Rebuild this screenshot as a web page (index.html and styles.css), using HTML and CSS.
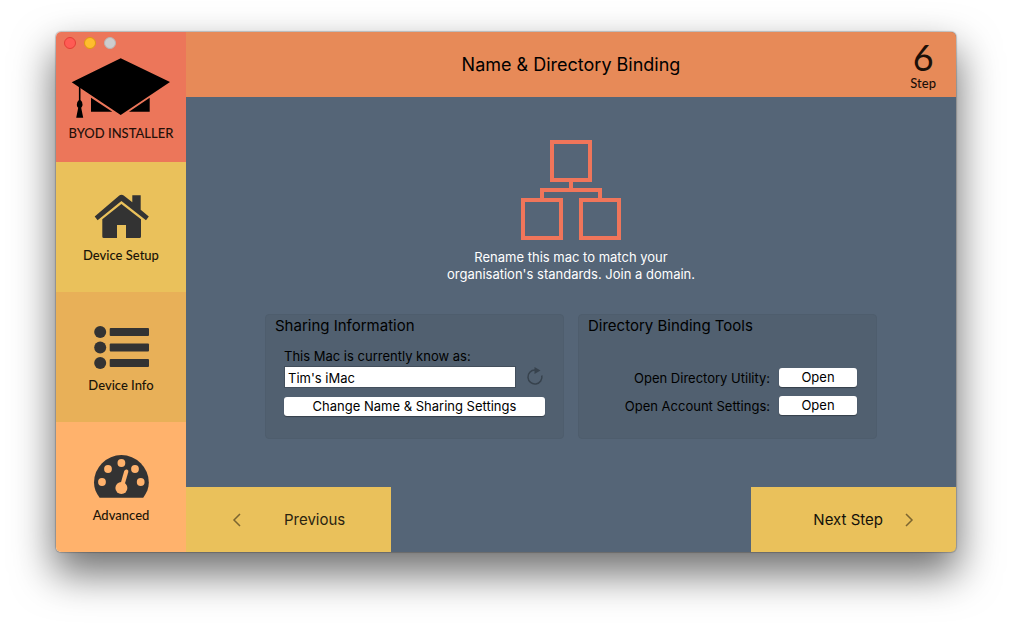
FILE: index.html
```html
<!DOCTYPE html>
<html lang="en">
<head>
<meta charset="utf-8">
<title>BYOD Installer</title>
<link rel="stylesheet" href="styles.css">
</head>
<body>
<div class="window">
  <nav class="sidebar">
    <div class="brand">
      <div class="lights">
        <button class="light close" aria-label="Close"></button>
        <button class="light minimize" aria-label="Minimize"></button>
        <button class="light zoom" aria-label="Zoom" disabled></button>
      </div>
      <svg class="logo" width="100" height="60" viewBox="0 0 100 60" aria-hidden="true">
        <path d="M49.7 .3 99 24 49.7 57 .7 24.3zM20 39.7V53.7H41.3zM78.7 39.7V53.7H58z"/>
        <path d="M7.9 28H9.5V42Q12 44 11.6 47 11 49 10.2 49.7L12.2 59.8H5.2L7.2 49.7Q6 49 5.8 47 5.4 44 7.9 42z"/>
      </svg>
      <span class="side-label">BYOD INSTALLER</span>
    </div>
    <a class="item setup" href="#setup">
      <svg width="54" height="45" viewBox="0 0 54 45" aria-hidden="true">
        <path d="M25.3 1.4Q27.5 0 29.7 1.4L38.3 8.3V1.3H46.7V15.7L54.8 22.5 52 26.2 27.4 7 3.6 26.2.7 22.5z"/>
        <path d="M27.4 10 47 25.3V42.5Q47 44 45.5 44H32V31H23V44H9.8Q8.3 44 8.3 42.5V25.3z"/>
      </svg>
      <span class="side-label">Device Setup</span>
    </a>
    <a class="item info" href="#info">
      <svg width="54" height="45" viewBox="0 0 54 45" aria-hidden="true">
        <circle cx="6.2" cy="8" r="6"/><circle cx="6.2" cy="23.5" r="6"/><circle cx="6.2" cy="39" r="6"/>
        <rect x="15.7" y="4" width="39.3" height="8" rx="1"/><rect x="15.7" y="19.5" width="39.3" height="8" rx="1"/><rect x="15.7" y="35" width="39.3" height="8" rx="1"/>
      </svg>
      <span class="side-label">Device Info</span>
    </a>
    <a class="item advanced" href="#advanced">
      <svg width="54" height="45" viewBox="0 0 54 45" aria-hidden="true">
        <path d="M5.6 43.7C2 39 0 34 0 28.5A27.4 27.4 0 0 1 54.8 28.5C54.8 34 52.8 39 49.2 43.7z"/>
        <g class="cut">
          <circle cx="27.4" cy="9" r="3.9"/><circle cx="14" cy="15" r="3.9"/><circle cx="41" cy="15" r="3.9"/>
          <circle cx="8" cy="28" r="3.9"/><circle cx="46.7" cy="28" r="3.9"/><circle cx="27.4" cy="34" r="6"/>
          <path d="M30.2 17Q31 15 33 15.5 34.8 16.200 34.3 18L30.5 31 26.5 30z"/>
        </g>
      </svg>
      <span class="side-label">Advanced</span>
    </a>
  </nav>
  <main class="main">
    <header class="header">
      <h1 class="title">Name &amp; Directory Binding</h1>
      <div class="step"><span class="step-number">6</span><span class="step-label">Step</span></div>
    </header>
    <section class="content">
      <svg class="network" width="100" height="100" viewBox="0 0 100 100" aria-hidden="true">
        <path d="M31 2H69V40H31zM2 60H40V98H2zM60 60H98V98H60zM50 40V50M21 60V50H79V60"/>
      </svg>
      <p class="intro">Rename this mac to match your<br>organisation's standards. Join a domain.</p>
      <div class="panels">
        <section class="panel">
          <h2 class="panel-title">Sharing Information</h2>
          <form class="sharing">
            <label class="name-label" for="mac-name">This Mac is currently know as:</label>
            <div class="name-row">
              <input class="name-input" id="mac-name" type="text" value="Tim's iMac">
              <button class="reload" type="button" aria-label="Reload name">
                <svg width="18" height="20" viewBox="0 0 18 20" aria-hidden="true">
                  <path class="ring" d="M9 3A7 7 0 1 0 15.8 8.500"/><path class="tip" d="M8.5 0 14.5 3.500 8.5 7z"/>
                </svg>
              </button>
            </div>
            <button class="button" type="button">Change Name &amp; Sharing Settings</button>
          </form>
        </section>
        <section class="panel">
          <h2 class="panel-title">Directory Binding Tools</h2>
          <div class="tools">
            <span id="utility">Open Directory Utility:</span><button class="button" type="button" aria-describedby="utility">Open</button>
            <span id="account">Open Account Settings:</span><button class="button" type="button" aria-describedby="account">Open</button>
          </div>
        </section>
      </div>
    </section>
    <footer class="footer">
      <button class="nav-button previous" type="button">
        <svg width="8" height="14" viewBox="0 0 8 14" aria-hidden="true"><path d="M7 1 1 7 7 13"/></svg>
        <span>Previous</span>
      </button>
      <button class="nav-button next" type="button">
        <span>Next Step</span>
        <svg width="8" height="14" viewBox="0 0 8 14" aria-hidden="true"><path d="M1 1 7 7 1 13"/></svg>
      </button>
    </footer>
  </main>
</div>
</body>
</html>
```
FILE: styles.css
```css
* { box-sizing: border-box; }

body {
  margin: 0;
  min-height: 100vh;
  padding: 32px 56px 80px;
  display: flex;
  background: #fff;
  color: #000;
  font: 13px/16px Inter, "Liberation Sans", sans-serif;
}

button, input { font: inherit; color: inherit; margin: 0; }
button { border: 0; padding: 0; background: none; }
h1, h2, p { margin: 0; font-weight: 400; }
svg { display: block; flex: none; overflow: visible; }

.window {
  flex: 1;
  display: grid;
  grid-template-columns: 130px 1fr;
  border-radius: 5px;
  overflow: hidden;
  box-shadow: 0 0 1px 1px rgba(0, 0, 0, .2), 0 20px 40px 2px rgba(0, 0, 0, .56);
}

.sidebar { display: grid; grid-template-rows: repeat(4, 1fr); }
.brand, .item { display: flex; flex-direction: column; align-items: center; }
.brand { background: #ec765a; }
.item { padding-top: 32px; gap: 8px; color: #1a1408; text-decoration: none; }
.item svg { fill: #333; }
.setup { background: #eac15b; }
.info { background: #e8b058; }
.advanced { background: #ffb26c; }
.advanced .cut { fill: #ffb26c; }
.side-label { font: 500 13px/16px Lato, sans-serif; }
.brand .side-label { margin-top: 7px; color: #241009; }

.lights { align-self: flex-start; display: flex; gap: 8px; padding: 5px 8px 9px; }
.light { width: 12px; height: 12px; border: 1px solid; border-radius: 50%; }
.close { background: #ff5b54; border-color: #e33e37; }
.minimize { background: #ffbd2e; border-color: #dd9a12; }
.zoom { background: #cdcdcd; border-color: #b9b4b2; }

.main { display: grid; grid-template-rows: 65px 1fr 65px; background: #556577; }
.header {
  display: grid;
  grid-template-columns: 1fr auto 1fr;
  align-items: center;
  padding: 0 20px;
  background: #e78a58;
}
.title { grid-column: 2; font-size: 18px; line-height: 24px; }
.step {
  justify-self: end;
  display: flex;
  flex-direction: column;
  align-items: center;
  color: #1c1008;
  font-family: Lato, sans-serif;
}
.step-number { font-size: 36px; line-height: 36px; }
.step-label { font-size: 13px; line-height: 16px; font-weight: 500; }

.content { display: flex; flex-direction: column; align-items: center; padding-top: 43px; }
.network { fill: none; stroke: #f0755a; stroke-width: 4; }
.intro { margin-top: 9px; color: #fff; line-height: 17px; text-align: center; }
.panels { display: grid; grid-template-columns: 299px 299px; gap: 14px; margin-top: 31px; }
.panel {
  min-height: 125px;
  padding: 1px 18px 21px;
  background: #516070;
  border: 1px solid #4e5d6d;
  border-radius: 4px;
}
.panel-title { margin-left: -9px; font-size: 15px; line-height: 20px; }
.sharing { display: flex; flex-direction: column; padding-top: 12px; }
.name-label { line-height: 16px; }
.name-row { display: flex; align-items: center; gap: 10px; margin: 2px 0 9px; }
.name-input {
  width: 232px;
  height: 22px;
  padding: 2px 3px 0;
  background: #fff;
  border: 1px solid #434f5c;
  border-radius: 0;
}
.reload .ring { fill: none; stroke: #37424d; stroke-width: 1.5; }
.reload .tip { fill: #37424d; }
.button {
  height: 19px;
  line-height: 19px;
  background: #fff;
  border-radius: 3px;
  box-shadow: 0 1px 1px rgba(0, 0, 0, .35);
}
.tools {
  display: grid;
  grid-template-columns: 1fr 78px;
  gap: 9px;
  align-items: center;
  padding: 32px 1px 0 0;
  text-align: right;
}
.tools .button { text-align: center; }

.footer { display: flex; justify-content: space-between; }
.nav-button {
  width: 205px;
  display: flex;
  align-items: center;
  background: #eac15b;
  font-size: 15px;
  line-height: 20px;
}
.nav-button svg { fill: none; stroke: #7c6530; stroke-width: 1.5; }
.previous { padding-left: 47px; gap: 43px; color: #2b2411; }
.next { padding-right: 43px; gap: 22px; justify-content: flex-end; color: #14110a; }
```
